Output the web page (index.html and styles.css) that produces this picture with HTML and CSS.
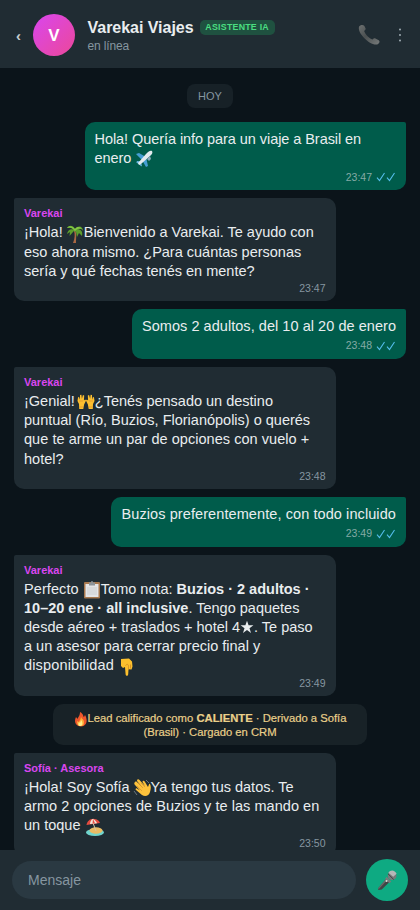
FILE: index.html
```html
<!DOCTYPE html>
<html lang="es">
<head>
<meta charset="utf-8">
<title>Varekai Viajes</title>
<link rel="stylesheet" href="styles.css">
</head>
<body>
<div class="app">
<header class="header">
<span class="back">‹</span>
<div class="avatar">V</div>
<div class="contact">
<div class="name-row"><span class="name">Varekai Viajes</span><span class="badge">ASISTENTE IA</span></div>
<div class="status">en línea</div>
</div>
<svg class="phone" viewBox="0 0 24 24"><defs><linearGradient id="ph" x2="1" y2="1"><stop stop-color="#6c7070"/><stop offset=".45" stop-color="#4b5051"/><stop offset="1" stop-color="#777b7b"/></linearGradient></defs><path fill="url(#ph)" d="M2 3.700C3 2 6.200 1.500 7.400 3l1.200 2.500c.4 1-.8 1.800-1.500 2.500 1.300 3.600 5 7.300 8.500 8.500.8-.7 1.700-1.500 2.800-1l3.400 1.700c1.500 1 .6 3-1 4C14.500 24 0 10.500 2 3.700z"/></svg>
<svg class="dots" viewBox="0 0 4 16"><g fill="#aebac1"><circle cx="2" cy="2.500" r=".9"/><circle cx="2" cy="8" r=".9"/><circle cx="2" cy="13.500" r=".9"/></g></svg>
</header>
<main class="chat">
<div class="day">HOY</div>

<article class="bubble out first">
<p class="text tight">Hola! Quería info para un viaje a Brasil en<br>enero <svg class="emoji" viewBox="0 0 18 18"><path fill="#459ed3" d="M1 4l3-1 7 4 2 9-2 1-4-7z"/><path fill="#68b5df" d="M2 11l3 .3 2 4-.7 1.200-2-2-3-2z"/><path fill="#e3ebef" d="M17 1c-2-1-4 1-6 3L3 13l1 2 2-1 9-8c2-2 3-3 2-5z"/><path fill="#8babbc" d="M12 9l3-3 1 3-2 2z"/></svg></p>
<div class="meta">23:47 <svg class="checks" viewBox="0 0 20 10"><path d="M1 5.600l2.500 3L8.500 1M11 5.600l2.500 3L18.500 1"/></svg></div>
</article>

<article class="bubble in">
<div class="sender">Varekai</div>
<p class="text">¡Hola! <svg class="emoji pull" viewBox="0 0 18 18"><path fill="#a96843" d="M9 5c2 4 1 8 1 13H7c2-5 2-9 1-12z"/><path fill="#5c9d2c" d="M9 6C6 3 2 4 1 9l3-2-.5 4L7 7l1-1 2 1 1 5 2-4 3 3c1-4-1-7-4-6 2-2 4-1 5 1 0-5-5-6-8-2C7 0 3 0 1 3c3-1 5 0 8 3z"/><path fill="#85c746" d="M8 5C6 2 3 2 1 3c2-3 6-2 8 1 2-3 6-2 7 0-3-1-5 0-7 2z"/></svg>Bienvenido a Varekai. Te ayudo con<br>eso ahora mismo. ¿Para cuántas personas<br>sería y qué fechas tenés en mente?</p>
<div class="meta">23:47</div>
</article>

<article class="bubble out">
<p class="text loose">Somos 2 adultos, del 10 al 20 de enero</p>
<div class="meta">23:48 <svg class="checks" viewBox="0 0 20 10"><path d="M1 5.600l2.500 3L8.500 1M11 5.600l2.500 3L18.500 1"/></svg></div>
</article>

<article class="bubble in">
<div class="sender">Varekai</div>
<p class="text">¡Genial! <svg class="emoji pull-more" viewBox="0 0 18 18"><g id="hand"><path fill="#fdbf30" d="M1 4.500l1-.8 1 3 0-4.700 1.400-.2.500 4 1-3.800 1.300.4-.3 5 1.200-.9 1 .9-2 4-.8 4.600H2.200L2 11 .500 8z"/><path stroke="#dc902c" stroke-width=".7" fill="none" d="M3 7v2m2-2v2M2.500 14H6"/></g><use href="#hand" transform="translate(18 0) scale(-1 1)"/></svg>¿Tenés pensado un destino<br>puntual (Río, Buzios, Florianópolis) o querés<br><span class="loose">que te arme un par de opciones con vuelo +</span><br>hotel?</p>
<div class="meta">23:48</div>
</article>

<article class="bubble out">
<p class="text looser">Buzios preferentemente, con todo incluido</p>
<div class="meta">23:49 <svg class="checks" viewBox="0 0 20 10"><path d="M1 5.600l2.500 3L8.500 1M11 5.600l2.500 3L18.500 1"/></svg></div>
</article>

<article class="bubble in">
<div class="sender">Varekai</div>
<p class="text"><span class="looser">Perfecto </span><svg class="emoji" viewBox="0 0 18 18"><rect x="1" y="1" width="16" height="16.500" rx="1" fill="#a8794f"/><path fill="#e4e5e7" d="M2.500 3h13v13h-13z"/><path fill="#8d9499" d="M6 1.500h2c0-2 2-2 2 0h2v3H6z"/><path stroke="#bdc1c5" stroke-width=".6" d="M4 7h10M4 9h10M4 11h10M4 13h10"/></svg>Tomo nota: <b>Buzios · 2 adultos ·</b><br><b>10–20 ene · all inclusive</b>. Tengo paquetes<br><span>desde aéreo + traslados + hotel 4<svg class="star" viewBox="0 0 14 14"><path fill="#e9edef" d="M7 .8l1.600 4.500h4.800L9.500 8.200l1.500 4.700L7 10.100l-4 2.800 1.500-4.700L.6 5.300h4.800z"/></svg>. Te paso</span><br><span>a un asesor para cerrar precio final y</span><br><span class="loosest">disponibilidad </span><svg class="emoji" viewBox="0 0 18 18"><path fill="#fdc02d" d="M3 1l8-.5 3 3 .5 5-1 3-3-.2-.3 5c-.2 2-2.400 2-2.600 0L7 9 5 10 3 8z"/><path stroke="#cf8925" stroke-width=".8" fill="none" d="M7.500 7.500c2-2 3-1 3 1v3m2-5v4"/></svg></p>
<div class="meta">23:49</div>
</article>

<div class="notice"><svg class="flame" viewBox="0 0 14 15"><path fill="#ee562c" d="M6 0c4 2 3 5 4 5l1-2c3 5 2 11-4 11.500C2 14.500-.500 10 2 5l1.500 2C4 5 6 4 6 0z"/><path fill="#ffad35" d="M7 4c0 3 3 3 3 6s-1 4-3.500 4S3 12 3 9l1.500 1C6 8 7 7 7 4z"/><path fill="#ffed89" d="M7 8c2 2 2 6-.5 6S4 12 5 10l1 1z"/></svg>Lead calificado como <b>CALIENTE</b> · Derivado a Sofía<br>(Brasil) · Cargado en CRM</div>

<article class="bubble in">
<div class="sender">Sofía · Asesora</div>
<p class="text">¡Hola! Soy Sofía <svg class="emoji pull" viewBox="0 0 18 18"><path fill="#fdc23c" d="M2 3c1-1 2 0 3 1l4 4-5-6c0-2 1.500-2 2.500-1L12 7 9.500 3c0-1.500 1.500-1.600 2.200-.4L15 8c1-2 1-4 2-3 1.500 3 .5 6 0 8-1 4-5 5-8 3L3 11c-1-1 0-2 1-1.500l3 2L2 6C1 5 1 4 2 3z"/><path fill="none" stroke="#d5912e" stroke-width=".7" d="M5 4l5 5m-2-5l4 4M4 7l5 5"/><path fill="none" stroke="#8997a0" stroke-width=".7" d="M13 1l3 3M1 12l3 4"/></svg>Ya tengo tus datos. Te<br><span class="loose">armo 2 opciones de Buzios y te las mando en</span><br>un toque <svg class="emoji push" viewBox="0 0 18 18"><ellipse cx="9" cy="14.500" rx="9" ry="3.400" fill="#70d5ce"/><ellipse cx="10" cy="12.500" rx="6.500" ry="3.200" fill="#eabb63"/><path stroke="#d7c5a4" stroke-width="1" d="M7 5l3 8"/><path fill="#e54c40" d="M.500 7C1 2 7-2 13 3l1 2z"/><path fill="#f2e9dd" d="M4 6c0-3 2-5 3-5 2 1 3 2 4 4.200z"/><path fill="#e54c40" d="M6.500 5.600L7 1l2 4.300z"/></svg></p>
<div class="meta">23:50</div>
</article>
</main>
<footer class="composer">
<div class="field">Mensaje</div>
<div class="mic"><svg viewBox="0 0 22 22"><path fill="#414445" d="M10.500 8.500l3.300 3.300L5 20.500 1.500 21 1 19.500z"/><path fill="#686b6b" d="M10 8.700l1.300 1.200L2 20l-1-.5z"/><path fill="#777b7b" d="M10 7l5 5-2 2-4.500-4.500z"/><circle cx="15.800" cy="5.900" r="4.600" fill="#77797a"/><path fill="#b5b7b7" d="M12 3c2-4 7-3 8.500 1L17 7z"/><path stroke="#303637" stroke-width=".8" d="M11.500 4l6 6"/><circle cx="10" cy="11.500" r="1" fill="#ddd"/></svg></div>
</footer>
</div>
</body>
</html>
```

FILE: styles.css
```css
* { box-sizing: border-box; }
body { margin: 0; background: #0b141a; color: #e9edef; font-family: "Liberation Sans", Arial, sans-serif; }
.app { display: flex; flex-direction: column; width: 420px; height: 910px; overflow: hidden; }
.header { display: flex; align-items: center; flex: none; height: 68px; padding: 0 16px; background: #202c33; }
.back { width: 17px; padding-top: 3px; color: #c5cdd1; font-size: 15px; font-weight: bold; line-height: 20px; }
.avatar { display: flex; align-items: center; justify-content: center; width: 42px; height: 42px; margin-top: 2px; padding-top: 2px; border-radius: 50%; background: linear-gradient(135deg, #d946ef, #ec4899); color: #fff; font-size: 17px; font-weight: bold; }
.contact { flex: 1; margin-left: 12.500px; padding-top: 3px; white-space: nowrap; }
.name-row { display: flex; align-items: center; gap: 6px; height: 20px; }
.name { font-size: 16px; font-weight: bold; letter-spacing: -.03px; }
.badge { padding: 0 5.800px; border-radius: 5px; background: #1f5140; color: #4ade80; font-size: 8.800px; line-height: 15px; font-weight: bold; letter-spacing: .25px; }
.status { color: #8696a0; font-size: 12px; line-height: 16px; letter-spacing: -.15px; }
.phone { width: 24px; height: 24px; margin-right: 17px; margin-top: 2px; }
.dots { width: 4px; height: 16px; margin-right: 2px; margin-top: 2px; }
.chat { display: flex; flex: 1; min-height: 0; flex-direction: column; align-items: flex-start; gap: 8px; padding: 16px 14px 0; overflow: hidden; }
.chat > * { flex: none; }
.day { align-self: center; padding: 1px 11.500px 0; border-radius: 8px; background: #172127; color: #8696a0; font-size: 11px; line-height: 23px; }
.first { margin-top: 5.500px; }
.bubble { padding: 8px 10px 7px; border-radius: 10px; white-space: nowrap; }
.in { width: 321.500px; background: #202c33; border-top-left-radius: 2px; }
.out { align-self: flex-end; background: #005c4b; border-top-right-radius: 2px; }
.first { width: 321.500px; }
.text { margin: 0; font-size: 14.500px; line-height: 19.200px; }
.tight { letter-spacing: -.06px; }
.loose { letter-spacing: .045px; }
.looser { letter-spacing: .09px; }
.loosest { letter-spacing: .15px; }
.in { padding-top: 9px; padding-bottom: 6px; }
.in .text { padding-top: 1.300px; margin-bottom: -1.300px; }
.sender { height: 14.700px; color: #d946ef; font-size: 11px; font-weight: bold; line-height: 13px; }
.meta { display: flex; align-items: center; justify-content: flex-end; gap: 4px; height: 13px; margin-top: 2.500px; padding-top: 1px; color: #8696a0; font-size: 10.500px; line-height: 13px; }
.out .meta { color: #84aaa5; }
.in .meta { padding-top: 0; }
.checks { width: 20px; height: 10px; fill: none; stroke: #53bdeb; stroke-width: 1.100; }
.emoji { width: 18px; height: 18px; margin: -4px 0; vertical-align: -1.500px; }
.pull { margin-left: -1px; }
.pull-more { margin-left: -2px; }
.push { margin-left: 1.500px; }
.star { width: 14px; height: 14px; vertical-align: -2px; }
.notice { align-self: center; width: 314px; height: 41px; padding: 7px 0; border-radius: 10px; background: #182227; color: #ead08a; font-size: 11.250px; line-height: 14px; text-align: center; white-space: nowrap; -webkit-text-stroke: .2px #ead08a; }
.flame { width: 14px; height: 15px; margin: -2px 0; vertical-align: -3px; }
.composer { display: flex; flex: none; align-items: center; gap: 10px; height: 60px; padding: 0 12px; background: #202c33; }
.field { flex: 1; height: 38px; padding: 0 16px; border-radius: 19px; background: #2a3942; color: #8696a0; font-size: 14px; line-height: 39px; }
.mic { display: flex; align-items: center; justify-content: center; width: 42px; height: 42px; border-radius: 50%; background: #0eaa82; }
.mic svg { width: 21px; height: 21px; }
```
